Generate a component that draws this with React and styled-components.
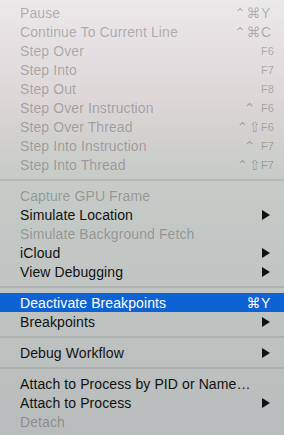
import React from 'react'
import styled, { createGlobalStyle } from 'styled-components'

const GlobalStyle = createGlobalStyle`
  html, body {
    margin: 0;
    padding: 0;
  }
  body {
    font-family: "Liberation Sans", Arial, sans-serif;
    -webkit-font-smoothing: antialiased;
  }
`

const Menu = styled.div`
  width: 284px;
  height: 435px;
  box-sizing: border-box;
  padding-top: 3px;
  overflow: hidden;
  display: flex;
  flex-direction: column;
  background: linear-gradient(
    180deg,
    #ece9ea 0px,
    #dcd6d7 100px,
    #c5cbc7 180px,
    #bfc4c2 300px,
    #b8bcbc 435px
  );
`

const Row = styled.div`
  height: 19px;
  flex-shrink: 0;
  display: flex;
  align-items: center;
  padding: 0 13px 0 20px;
  font-size: 14px;
  letter-spacing: 0.1px;
  color: ${p => (p.$active ? '#fff' : p.$disabled ? 'rgba(0,0,0,0.27)' : '#111')};
  background: ${p => (p.$active ? '#0e63d4' : 'transparent')};
`

const Label = styled.span`
  flex: 1;
  white-space: nowrap;
`

const Shortcut = styled.span`
  display: flex;
  align-items: center;
  font-family: "DejaVu Sans", "Liberation Sans", sans-serif;
`

const Mods = styled.span`
  font-size: 14px;
  letter-spacing: 0.5px;
  white-space: pre;
`

const Key = styled.span`
  width: 10px;
  font-family: "Liberation Sans", Arial, sans-serif;
  font-size: ${p => (p.$small ? '11px' : '14px')};
`

const Arrow = styled.span`
  width: 0;
  height: 0;
  margin-right: 1px;
  border-top: 5px solid transparent;
  border-bottom: 5px solid transparent;
  border-left: 8px solid #111;
`

const Separator = styled.div`
  height: 12px;
  flex-shrink: 0;
  display: flex;
  align-items: center;
  &::after {
    content: '';
    flex: 1;
    height: 2px;
    background: rgba(0, 0, 0, 0.09);
  }
`

const items = [
  { label: 'Pause', disabled: true, mods: '⌃⌘', key: 'Y' },
  { label: 'Continue To Current Line', disabled: true, mods: '⌃⌘', key: 'C' },
  { label: 'Step Over', disabled: true, key: 'F6', small: true },
  { label: 'Step Into', disabled: true, key: 'F7', small: true },
  { label: 'Step Out', disabled: true, key: 'F8', small: true },
  { label: 'Step Over Instruction', disabled: true, mods: '⌃ ', key: 'F6', small: true },
  { label: 'Step Over Thread', disabled: true, mods: '⌃⇧', key: 'F6', small: true },
  { label: 'Step Into Instruction', disabled: true, mods: '⌃ ', key: 'F7', small: true },
  { label: 'Step Into Thread', disabled: true, mods: '⌃⇧', key: 'F7', small: true },
  'sep',
  { label: 'Capture GPU Frame', disabled: true },
  { label: 'Simulate Location', sub: true },
  { label: 'Simulate Background Fetch', disabled: true },
  { label: 'iCloud', sub: true },
  { label: 'View Debugging', sub: true },
  'sep',
  { label: 'Deactivate Breakpoints', active: true, mods: '⌘', key: 'Y' },
  { label: 'Breakpoints', sub: true },
  'sep',
  { label: 'Debug Workflow', sub: true },
  'sep',
  { label: 'Attach to Process by PID or Name…' },
  { label: 'Attach to Process', sub: true },
  { label: 'Detach', disabled: true },
]

const App = () => {
  return (
    <>
      <GlobalStyle />
      <Menu>
        {items.map((item, i) =>
          item === 'sep' ? (
            <Separator key={i} />
          ) : (
            <Row key={i} $disabled={item.disabled} $active={item.active}>
              <Label>{item.label}</Label>
              {item.key && (
                <Shortcut>
                  {item.mods && <Mods>{item.mods}</Mods>}
                  <Key $small={item.small}>{item.key}</Key>
                </Shortcut>
              )}
              {item.sub && <Arrow />}
            </Row>
          )
        )}
      </Menu>
    </>
  )
}

export default App
